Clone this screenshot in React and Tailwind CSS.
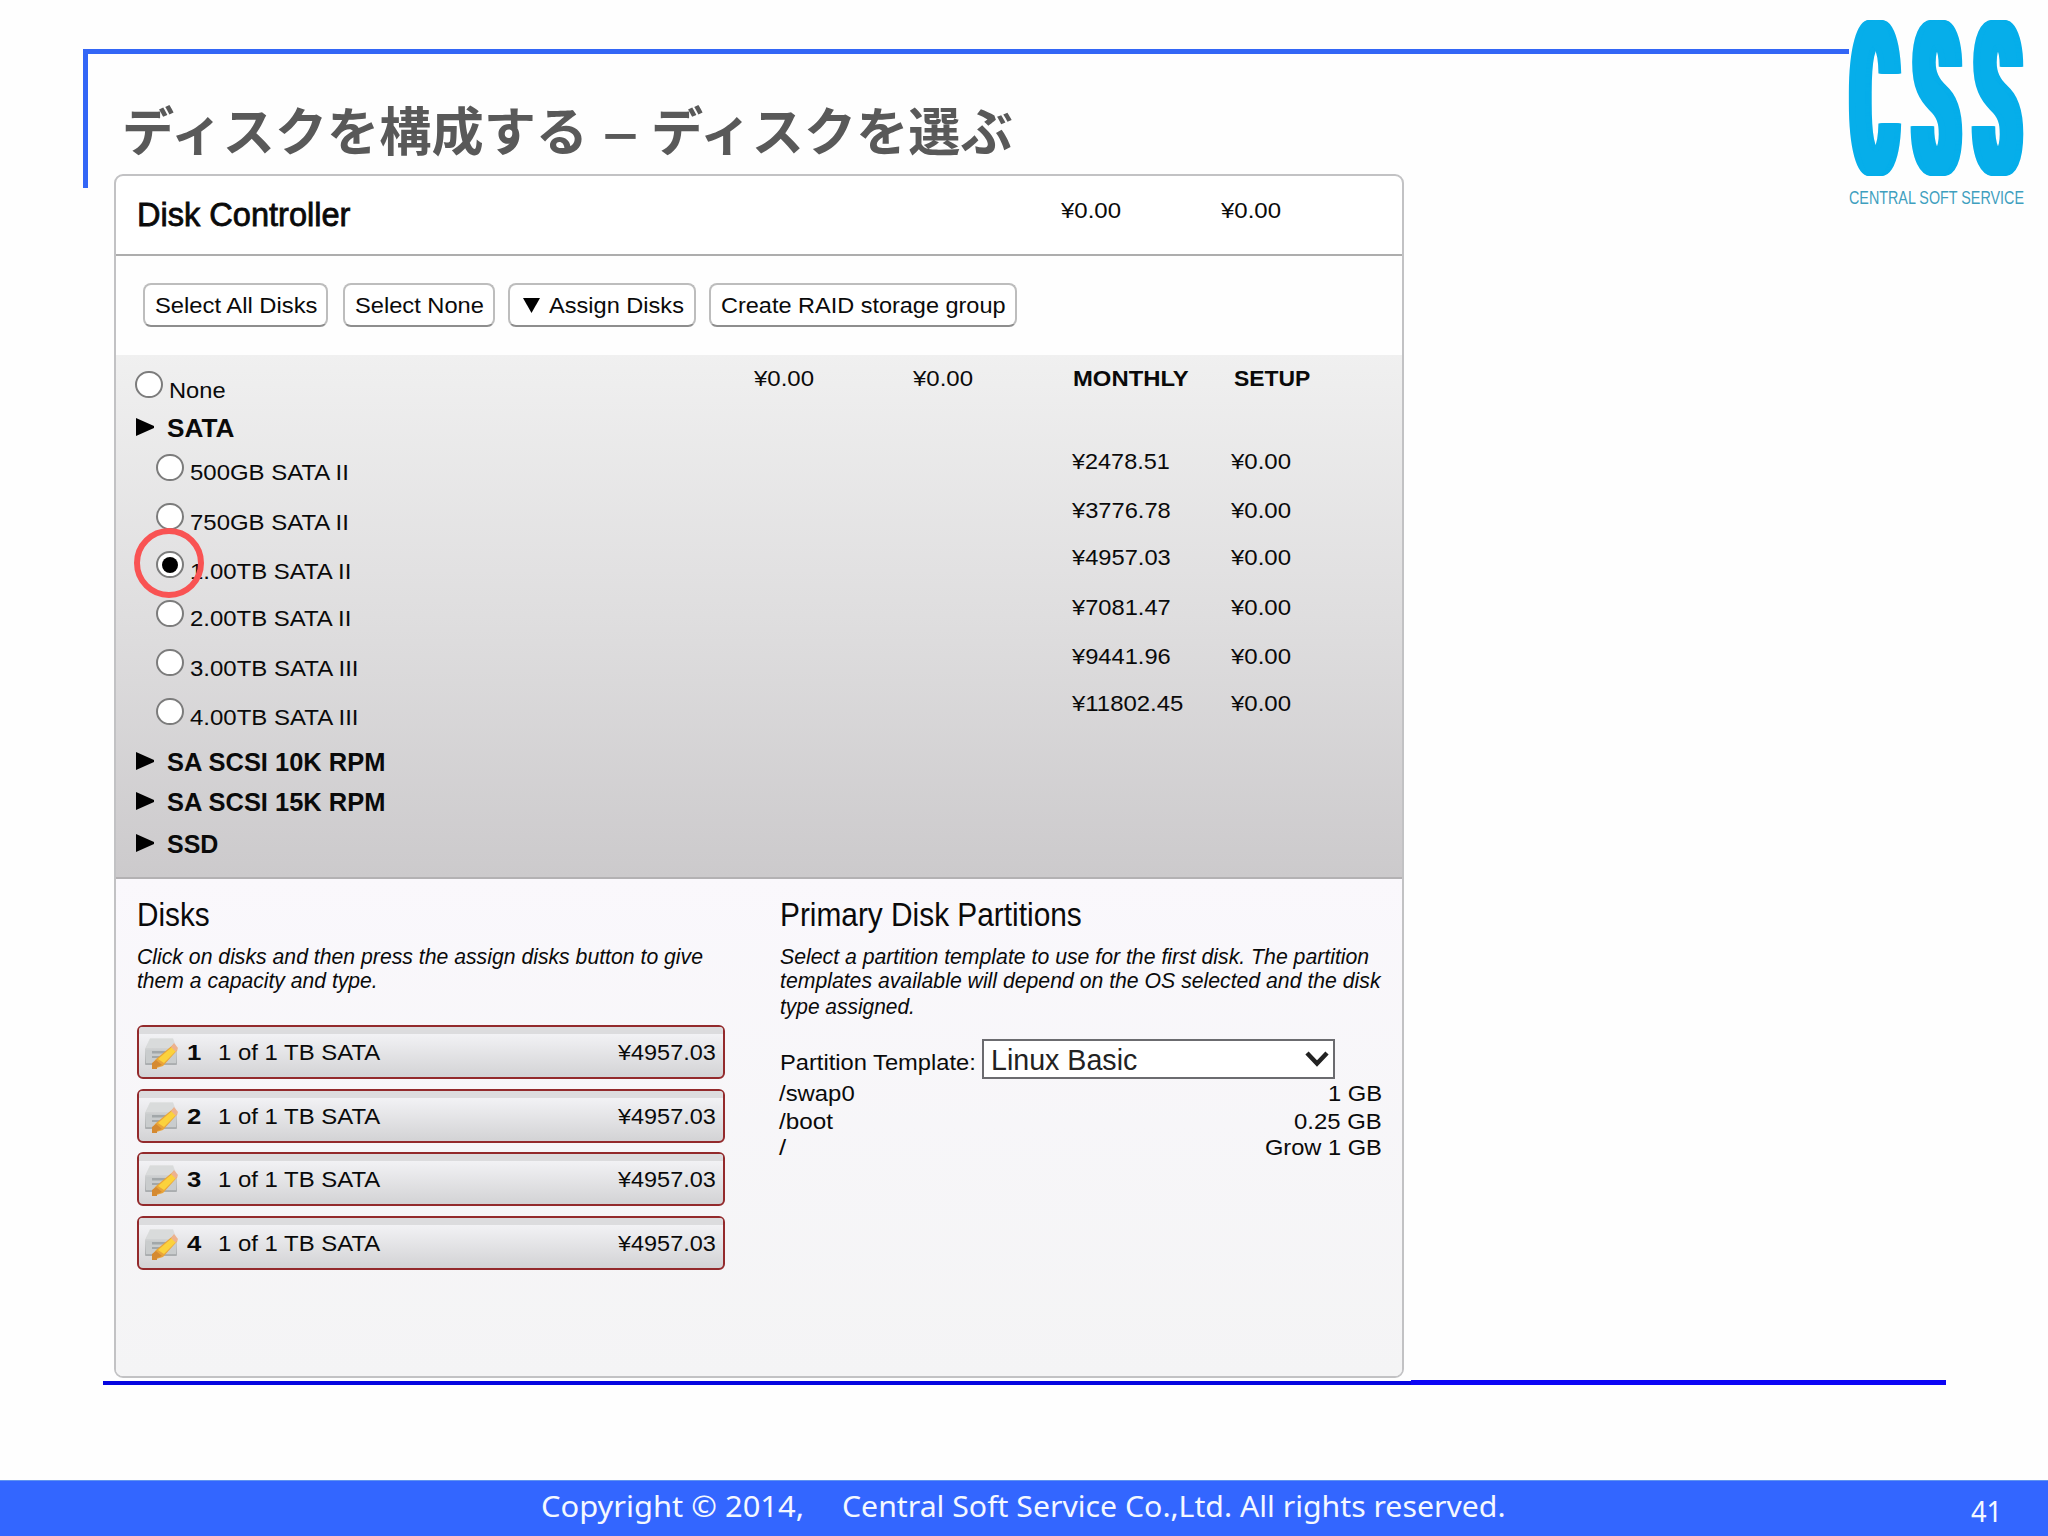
import React, { useLayoutEffect, useRef, useState } from "react";

/* Single line of text, condensed or widened to the given width. */
function T({ w, className = "", children }) {
  const ref = useRef(null);
  const [k, setK] = useState(1);
  useLayoutEffect(() => {
    const natural = ref.current.offsetWidth;
    if (natural) setK(w / natural);
  }, [w]);
  return (
    <span className={"inline-block shrink-0 text-left whitespace-pre " + className} style={{ width: w }}>
      <span ref={ref} className="inline-block origin-left" style={{ transform: `translateY(0.6px) scaleX(${k})` }}>
        {children}
      </span>
    </span>
  );
}

function Radio({ checked }) {
  return (
    <span className="flex h-[27px] w-[28px] shrink-0 items-center justify-center rounded-full border-2 border-[#7c7c7c] bg-white">
      {checked && <span className="h-[16px] w-[16px] rounded-full bg-black" />}
    </span>
  );
}

function Arrow() {
  return (
    <svg className="h-[18px] w-[18px] shrink-0" viewBox="0 0 18 18">
      <path d="M0 0L18 8V10L0 18Z" fill="#000" />
    </svg>
  );
}

function DiskIcon({ id }) {
  return (
    <svg className="mb-[5px] h-[32px] w-[34px] shrink-0" viewBox="0 0 34 32">
      <defs>
        <linearGradient id={id} x1="0" y1="0" x2="0" y2="1">
          <stop offset="0" stopColor="#e9eaea" />
          <stop offset="1" stopColor="#a9acae" />
        </linearGradient>
      </defs>
      <path d="M6 1H29L33 12V27Q33 28 32 28H2Q1 28 1 27V12Z" fill={`url(#${id})`} />
      <path d="M6 1.500H29L32 11H2Z" fill="#d9dbdb" />
      <path d="M2 13H32V26H2Z" fill="#c9cccd" />
      <path d="M8 14H22V16.500H8ZM8 19H18V21H8Z" fill="#a2a7a9" />
      <path d="M30 7L33.500 13L19 29L9 32L8 27L12 22Z" fill="#e9a43a" />
      <path d="M28 10L32 14L20 26L14 22Z" fill="#fbd23c" />
      <path d="M27 10L30 6L34 11L32 15Z" fill="#edb28e" />
      <path d="M8 26L12 23L18 28L13 30L13 32H8Z" fill="#d58a32" />
    </svg>
  );
}

const LETTER =
  "block font-bold font-['Roboto',sans-serif] text-[213px] leading-[157px] text-[#06aeea] [text-shadow:-20px_0_#06aeea,-17px_0_#06aeea,-14px_0_#06aeea,-11px_0_#06aeea,-8px_0_#06aeea,-5px_0_#06aeea,-2px_0_#06aeea,2px_0_#06aeea,5px_0_#06aeea,8px_0_#06aeea,11px_0_#06aeea,14px_0_#06aeea,17px_0_#06aeea,20px_0_#06aeea]";

function Logo() {
  return (
    <div className="mt-[19px] w-[175px]">
      <div className="flex h-[157px] items-center justify-between pt-[7px]">
        <div className="flex w-[52px] justify-center">
          <span className={LETTER + " scale-x-[0.32]"}>C</span>
        </div>
        <div className="flex w-[52px] justify-center">
          <span className={LETTER + " scale-x-[0.33]"}>S</span>
        </div>
        <div className="flex w-[52px] justify-center">
          <span className={LETTER + " scale-x-[0.33]"}>S</span>
        </div>
      </div>
      <div className="mt-[11px] flex h-[20px] items-center">
        <T w={175} className="text-[19px] leading-[20px] text-[#3f9fbe]">CENTRAL SOFT SERVICE</T>
      </div>
    </div>
  );
}

const BTN =
  "flex h-[44px] items-center justify-center rounded-[8px] border-2 border-[#bdbdbd] border-b-[#8e8e8e] bg-white";

const OPTIONS = [
  { label: "500GB SATA II", w: 159, price: "¥2478.51", pw: 98, lm: "mt-[10px]", pm: "mb-[13px]" },
  { label: "750GB SATA II", w: 159, price: "¥3776.78", pw: 99, lm: "mt-[12px]", pm: "mb-[12px]" },
  { label: "1.00TB SATA II", w: 161, price: "¥4957.03", pw: 99, lm: "mt-[12px]", pm: "mb-[15px]", checked: true },
  { label: "2.00TB SATA II", w: 161, price: "¥7081.47", pw: 99, lm: "mt-[9px]", pm: "mb-[13px]" },
  { label: "3.00TB SATA III", w: 168, price: "¥9441.96", pw: 99, lm: "mt-[10px]", pm: "mb-[13px]" },
  { label: "4.00TB SATA III", w: 168, price: "¥11802.45", pw: 111, lm: "mt-[12px]", pm: "mb-[17px]" },
];

const COLS = "grid grid-cols-[638px_159px_159px_160px_170px] items-center";

function Group({ label, w, className }) {
  return (
    <div className={"flex items-center pl-[20px] " + className}>
      <Arrow />
      <T w={w} className="ml-[13px] text-[25px] leading-[26px] font-bold">{label}</T>
    </div>
  );
}

function DiskRow({ n }) {
  return (
    <div className="h-[54px] rounded-[6px] border-2 border-[#932a2c] bg-gradient-to-b from-[#f7f7fa] to-[#d3d3d5]">
      <div className="h-[7px] rounded-t-[3px] bg-[#dcdcde]" />
      <div className="flex h-[43px] items-center pl-[5px] pr-[7px]">
        <DiskIcon id={`disk${n}`} />
        <T w={14} className="mb-[7px] ml-[9px] text-[22px] leading-[24px] font-bold">{n}</T>
        <T w={162} className="mb-[7px] ml-[17px] text-[22px] leading-[24px]">1 of 1 TB SATA</T>
        <T w={98} className="mb-[7px] ml-auto text-[22px] leading-[24px]">¥4957.03</T>
      </div>
    </div>
  );
}

export default function App() {
  return (
    <div className="flex h-[1536px] w-[2048px] flex-col overflow-hidden bg-[#fefefe] font-['Liberation_Sans',sans-serif] text-[#0a0a0a]">
      <header className="flex h-[174px] shrink-0 items-start pl-[83px]">
        <div className="mt-[49px] h-[139px] w-[1766px] border-t-5 border-l-5 border-[#3366f6] pt-[44px] pl-[34px]">
          <h1 className="flex text-[52.2px] leading-[60px] font-bold text-[#595959] font-['Noto_Sans_CJK_JP',sans-serif]">
            <span>ディスクを構成する</span>
            <span className="mr-[11px] ml-[13px] w-[39px] scale-x-130 text-center">–</span>
            <span>ディスクを選ぶ</span>
          </h1>
        </div>
        <Logo />
      </header>

      <main className="ml-[114px] flex h-[1204px] w-[1290px] shrink-0 flex-col overflow-hidden rounded-[9px] border-2 border-[#c2c2c4] bg-white">
        <div className="flex h-[80px] shrink-0 items-center border-b-2 border-[#adadad] pl-[21px]">
          <T w={213} className="mb-[2px] text-[33px] leading-[40px] [-webkit-text-stroke:0.8px_#0a0a0a]">Disk Controller</T>
          <T w={60} className="mb-[10px] ml-[711px] text-[22px] leading-[24px]">¥0.00</T>
          <T w={60} className="mb-[10px] ml-[100px] text-[22px] leading-[24px]">¥0.00</T>
        </div>

        <div className="flex h-[99px] shrink-0 items-start bg-[#fefefe] pt-[27px] pl-[27px] text-[22px] leading-[24px]">
          <button className={BTN + " w-[185px]"}><T w={162}>Select All Disks</T></button>
          <button className={BTN + " ml-[15px] w-[152px]"}><T w={129}>Select None</T></button>
          <button className={BTN + " ml-[13px] w-[188px]"}>
            <svg className="mr-[9px] ml-[2px] h-[15px] w-[17px]" viewBox="0 0 17 15"><path d="M0 0H17L8.500 15Z" /></svg>
            <T w={135}>Assign Disks</T>
          </button>
          <button className={BTN + " ml-[13px] w-[308px]"}><T w={285}>Create RAID storage group</T></button>
        </div>

        <section className="h-[524px] shrink-0 border-b-2 border-[#b3b1b3] bg-gradient-to-b from-[#f0f0f0] via-[#dfdedf] to-[#cccacc] text-[22px] leading-[24px]">
          <div className={COLS + " h-[59px]"}>
            <div className="flex items-center pl-[19px]">
              <Radio />
              <T w={57} className="mt-[11px] ml-[6px]">None</T>
            </div>
            <T w={60} className="mb-[13px]">¥0.00</T>
            <T w={60} className="mb-[13px]">¥0.00</T>
            <T w={116} className="mb-[13px] ml-[1px] font-bold">MONTHLY</T>
            <T w={76} className="mb-[13px] ml-[2px] font-bold">SETUP</T>
          </div>
          <Group label="SATA" w={67} className="h-[26px]" />
          <div className="mt-[3px]">
            {OPTIONS.map((o) => (
              <div key={o.label} className={COLS + " h-[48.8px]"}>
                <div className="relative flex items-center pl-[40px]">
                  <Radio checked={o.checked} />
                  <T w={o.w} className={"ml-[6px] " + o.lm}>{o.label}</T>
                  {o.checked && (
                    <span className="absolute top-1/2 left-[18px] h-[70px] w-[70px] -translate-y-[37px] rounded-full border-6 border-[#f95353]" />
                  )}
                </div>
                <span />
                <span />
                <T w={o.pw} className={o.pm}>{o.price}</T>
                <T w={60} className={"-ml-px " + o.pm}>¥0.00</T>
              </div>
            ))}
          </div>
          <Group label="SA SCSI 10K RPM" w={218} className="mt-[5px] h-[40px]" />
          <Group label="SA SCSI 15K RPM" w={218} className="h-[41px]" />
          <Group label="SSD" w={51} className="h-[43px]" />
        </section>

        <section className="flex grow items-start bg-gradient-to-b from-[#faf8fc] to-[#f4f4f5] text-[22px] leading-[24px]">
          <div className="ml-[21px] flex w-[588px] flex-col pt-[15px]">
            <T w={73} className="text-[33px] leading-[40px]">Disks</T>
            <div className="mt-[10px] flex flex-col italic">
              <T w={566}>Click on disks and then press the assign disks button to give</T>
              <T w={241}>them a capacity and type.</T>
            </div>
            <div className="mt-[33px] flex flex-col gap-[9.700px]">
              {[1, 2, 3, 4].map((n) => <DiskRow key={n} n={n} />)}
            </div>
          </div>

          <div className="ml-[54px] flex w-[603px] flex-col pt-[15px]">
            <T w={302} className="ml-[1px] text-[33px] leading-[40px]">Primary Disk Partitions</T>
            <div className="mt-[10px] ml-[1px] flex flex-col italic">
              <T w={589}>Select a partition template to use for the first disk. The partition</T>
              <T w={601}>templates available will depend on the OS selected and the disk</T>
              <T w={135} className="mt-[2px]">type assigned.</T>
            </div>
            <div className="mt-[21px] flex h-[40px] items-center">
              <T w={196} className="mt-[5px] ml-[1px]">Partition Template:</T>
              <div className="ml-[6px] flex h-[40px] w-[353px] items-center justify-between border-2 border-[#6b6b6f] bg-white pr-[4px] pl-[7px]">
                <T w={146} className="text-[29px] leading-[34px] text-[#222]">Linux Basic</T>
                <svg className="h-[16px] w-[24px]" viewBox="0 0 24 16" fill="none" stroke="#222" strokeWidth="4.500">
                  <path d="M2 2L12 12.500L22 2" />
                </svg>
              </div>
            </div>
            <div className="mt-[1px] flex h-[26px] items-center justify-between"><T w={76}>/swap0</T><T w={54}>1 GB</T></div>
            <div className="mt-[2px] flex h-[26px] items-center justify-between"><T w={54}>/boot</T><T w={88}>0.25 GB</T></div>
            <div className="flex h-[26px] items-center justify-between"><T w={7}>/</T><T w={117}>Grow 1 GB</T></div>
          </div>
        </section>
      </main>

      <div className="mt-[2px] ml-[103px] flex h-[5px] w-[1843px] shrink-0 items-end">
        <div className="h-[4px] w-[1308px] bg-[#0505e0]" />
        <div className="h-[5px] grow bg-[#0c05f5]" />
      </div>

      <footer className="mt-auto flex h-[56px] shrink-0 items-center bg-[#3366ff] border-t border-[#5f93f0] font-['Noto_Sans',sans-serif] text-[29px] leading-[40px] text-[#f4f8ff]">
        <T w={263} className="mb-[8px] ml-[541px]">Copyright © 2014,</T>
        <T w={664} className="mb-[8px] ml-[38px]">Central Soft Service Co.,Ltd. All rights reserved.</T>
        <T w={31} className="mt-[3px] ml-[465px]">41</T>
      </footer>
    </div>
  );
}
